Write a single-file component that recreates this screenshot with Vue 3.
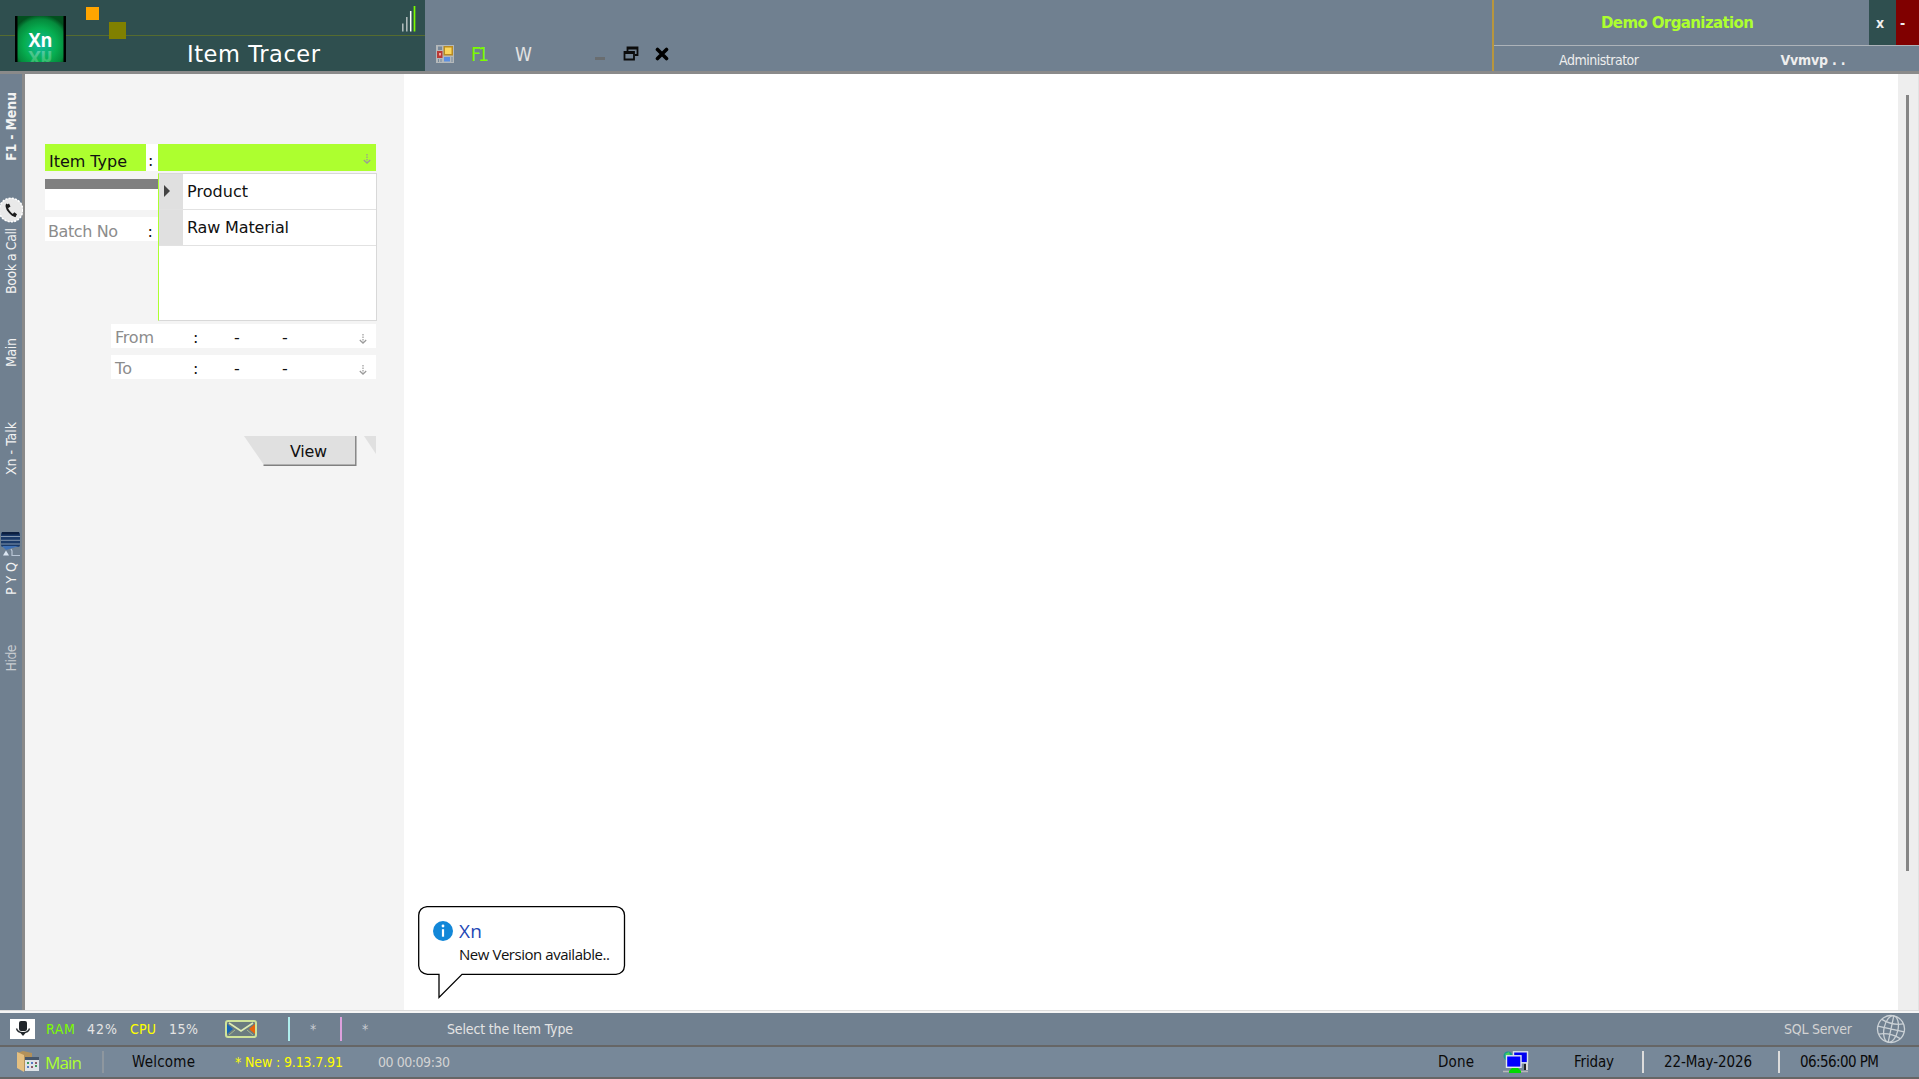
<template>
  <div class="app">
    <header class="header">
      <div class="brand">
        <div class="brand-top"></div>
        <div class="brand-line"></div>
        <svg class="logo" width="51" height="46" viewBox="0 0 51 46">
          <defs>
            <radialGradient id="logoGlow" cx="50%" cy="62%" r="65%">
              <stop offset="0" stop-color="#12b8a4" />
              <stop offset="0.55" stop-color="#06ae50" />
              <stop offset="0.85" stop-color="#058a3c" />
              <stop offset="1" stop-color="#02501f" />
            </radialGradient>
            <linearGradient id="mirror" x1="0" y1="1" x2="0" y2="0">
              <stop offset="0" stop-color="#fff" stop-opacity="0.35" />
              <stop offset="1" stop-color="#fff" stop-opacity="0.1" />
            </linearGradient>
          </defs>
          <rect width="51" height="46" fill="#000" />
          <rect x="2.500" width="46" height="46" fill="url(#logoGlow)" />
          <text x="25.500" y="30.500" text-anchor="middle" textLength="24" lengthAdjust="spacingAndGlyphs" class="logo-text">Xn</text>
          <text x="25.500" y="-35" text-anchor="middle" textLength="24" lengthAdjust="spacingAndGlyphs" transform="scale(1 -1)" class="logo-text reflected">Xn</text>
        </svg>
        <i class="square orange"></i>
        <i class="square olive"></i>
        <svg class="signal" width="18" height="32" viewBox="0 0 18 32">
          <path d="M3.800 22.500v8M7.800 16v14.500" stroke="#b4c0c0" stroke-width="1.500" />
          <path d="M11.700 10v20.500" stroke="#fff" stroke-width="1.500" />
          <path d="M15.500 5v25.500" stroke="#7cfc00" stroke-width="1.700" />
        </svg>
        <span v-fit="133" class="title">Item Tracer</span>
      </div>

      <div class="toolbar">
        <svg class="form-icon" width="18" height="18" viewBox="0 0 18 18">
          <rect width="18" height="18" fill="#b4b8ba" />
          <rect x="2" y="1.500" width="4" height="3.500" fill="#778899" />
          <rect x="1" y="6" width="5.500" height="7" fill="#b93a36" />
          <rect x="3" y="8" width="2" height="2.500" fill="#f4a49c" />
          <rect x="7.500" y="1" width="9.500" height="9.500" fill="#b98b22" />
          <rect x="9" y="2.500" width="6.500" height="6.500" fill="#fbd75c" />
          <rect x="8" y="12" width="6" height="4.500" fill="#5c8fe0" />
          <path d="M2 14h1v3H2zM4.500 14h1v3h-1zM15.500 12h1v5h-1z" fill="#778899" />
        </svg>
        <div class="tool f1"><span v-fit="18">F1</span></div>
        <div class="tool w"><span>W</span></div>
        <i class="minimize"></i>
        <svg class="restore" width="16" height="15" viewBox="0 0 16 15">
          <path d="M4.500 5V1.500h10V9H12M4 2.500h11M1.500 6h9.500v7.500H1.500zM1 7.200h10.500" fill="none" stroke="#0b0b0b" stroke-width="1.800" />
        </svg>
        <svg class="close" width="14" height="14" viewBox="0 0 14 14">
          <path d="M2.500 2.500l9 9M11.500 2.500l-9 9" stroke="#000" stroke-width="3.600" stroke-linecap="round" />
        </svg>
      </div>

      <div class="account">
        <div class="account-top">
          <div class="org"><span v-fit="153">Demo Organization</span></div>
          <button class="win-btn teal">x</button>
          <button class="win-btn red">-</button>
        </div>
        <div class="account-bottom">
          <span v-fit="80" class="user">Administrator</span>
          <span v-fit="65" class="code">Vvmvp . .</span>
        </div>
      </div>
    </header>

    <div class="body">
      <nav class="side">
        <div class="side-slot menu"><b v-fit="69">F1 - Menu</b></div>
        <svg class="phone" width="23" height="26" viewBox="0 0 23 26">
          <circle cx="11" cy="13" r="12" fill="#e9e9e9" />
          <circle cx="11" cy="13" r="11.800" fill="none" stroke="#fff" stroke-width="1.600" stroke-dasharray="2 1.300" />
          <path d="M7 7c-1 2 0 5 2 7.500s4.500 4.500 6.500 4.500" fill="none" stroke="#1c1c1c" stroke-width="2" />
          <path d="M6 8.500l3-2 1.500 3-2.600 1.800zM12.300 17.500l2-2.300 2.700 2-1.700 3z" fill="#1c1c1c" />
        </svg>
        <div class="side-slot call"><span v-fit="66">Book a Call</span></div>
        <div class="side-slot main"><span v-fit="29">Main</span></div>
        <div class="side-slot talk"><span v-fit="53">Xn - Talk</span></div>
        <svg class="pyq-icon" width="22" height="25" viewBox="0 0 22 25">
          <rect x="1" y="0" width="19" height="15" rx="2" fill="#1b3a68" />
          <path d="M2 1h17" stroke="#0c1f40" stroke-width="3" />
          <path d="M1 4.500h19M1 8.300h19M1 12h19" stroke="#8295ac" stroke-width="1" />
          <path d="M2 14h17l-13 4z" fill="#3f70b4" />
          <path d="M3 23.500l3-5 3 5z" fill="#dce6f2" />
          <path d="M11 17l1 2v4.500h8" fill="none" stroke="#b9c6d6" stroke-width="1.200" />
        </svg>
        <div class="side-slot pyq"><span v-fit="33">P Y Q</span></div>
        <div class="side-slot hide"><span v-fit="27">Hide</span></div>
      </nav>

      <section class="panel">
        <div class="row type-row">
          <div class="label active"><span v-fit="78">Item Type</span></div>
          <div class="colon">:</div>
          <div class="combo">
            <svg class="arrow" width="8" height="11" viewBox="0 0 8 11"><path class="stem" d="M4 0v9" /><path d="M.8 6L4 9.200 7.200 6" /></svg>
          </div>
          <div class="dropdown">
            <div v-for="(item, i) in itemTypes" :key="item.name" class="option">
              <div class="option-head"><i v-if="i === 0" class="pointer"></i></div>
              <div class="option-name"><span v-fit="item.width">{{ item.name }}</span></div>
            </div>
          </div>
        </div>
        <div class="divider-bar"></div>
        <div class="blank-row"></div>
        <div class="row batch-row">
          <span v-fit="70" class="muted">Batch No</span>
          <span class="batch-colon">:</span>
        </div>
        <div v-for="d in dates" :key="d.name" class="row date-row">
          <div class="date-name"><span v-fit="d.width">{{ d.name }}</span></div>
          <div class="date-colon">:</div>
          <div class="dash">-</div>
          <div class="dash">-</div>
          <svg class="arrow date-arrow" width="8" height="11" viewBox="0 0 8 11"><path class="stem" d="M4 0v9" /><path d="M.8 6L4 9.200 7.200 6" /></svg>
        </div>
        <div class="actions">
          <button class="view">
            <svg class="view-bg" width="113" height="30" viewBox="0 0 113 30">
              <path d="M0 0h112v29H20z" fill="#e0e0e0" />
              <path d="M19.500 29.300h92.300V0" fill="none" stroke="#808080" stroke-width="1.400" />
            </svg>
            <span v-fit="37" class="view-text">View</span>
          </button>
          <i class="corner"></i>
        </div>
      </section>

      <main class="content">
        <div class="balloon">
          <svg class="balloon-shape" width="208" height="94" viewBox="0 0 208 94">
            <path d="M9 .7h189q8 1 8.500 8.500v50.600q-.5 8-8.500 8.500H44L21 91.500V68.300H9.500Q1.200 67.300.7 59.800V9.200Q1.200 1.700 9 .7z" fill="#fff" stroke="#000" stroke-width="1.300" />
          </svg>
          <div class="balloon-head">
            <svg width="20" height="20" viewBox="0 0 20 20">
              <circle cx="10" cy="10" r="10" fill="#1287d8" />
              <path d="M10 8.200v7.500" stroke="#fff" stroke-width="2.200" />
              <circle cx="10" cy="5" r="1.400" fill="#fff" />
            </svg>
            <span v-fit="23" class="balloon-title">Xn</span>
          </div>
          <div class="balloon-text"><span v-fit="151">New Version available..</span></div>
        </div>
      </main>

      <div class="scroll"><div class="thumb"></div></div>
    </div>

    <footer>
      <div class="bar status">
        <div class="mic">
          <svg width="16" height="16" viewBox="0 0 16 16">
            <rect x="4" y="0" width="8" height="10" rx="2" fill="#22272c" />
            <path d="M1.500 7.500q1 4 6.500 4.200 5.500-.2 6.500-4.200" fill="none" stroke="#22272c" stroke-width="1.300" />
            <path d="M5.500 12h5L8 15z" fill="#22272c" />
          </svg>
        </div>
        <div class="slot ram"><span v-fit="29">RAM</span></div>
        <div class="slot pct1"><span v-fit="30">42%</span></div>
        <div class="slot cpu"><span v-fit="26">CPU</span></div>
        <div class="slot pct2"><span v-fit="29">15%</span></div>
        <svg class="mail" width="32" height="18" viewBox="0 0 32 18">
          <rect x="1" y="1" width="30" height="16" rx="2" fill="#6b7c80" stroke="#cfe39a" stroke-width="2" />
          <path d="M2 4l6 5-6 5z" fill="#1565b5" />
          <path d="M30 4l-6 5 6 5z" fill="#e8640c" />
          <path d="M4 3l12 8L28 3" fill="none" stroke="#dcebb2" stroke-width="1.600" />
          <path d="M4 15l6-5M28 15l-6-5" fill="none" stroke="#a9b98f" stroke-width="1" />
        </svg>
        <i class="sep cyan"></i>
        <div class="slot star">*</div>
        <i class="sep pink"></i>
        <div class="slot star star2">*</div>
        <div class="slot hint"><span v-fit="126">Select the Item Type</span></div>
        <div class="slot sql"><span v-fit="68">SQL Server</span></div>
        <svg class="globe" width="30" height="30" viewBox="0 0 30 30">
          <g fill="none" stroke="#cbd1d6" stroke-width="1.300" transform="rotate(12 15 15)">
            <circle cx="15" cy="15" r="13.500" />
            <ellipse cx="15" cy="15" rx="7" ry="13.500" />
            <path d="M15 1.500v27M1.500 15h27M4 7.500q11 4 22 0M4 22.500q11-4 22 0" />
          </g>
        </svg>
      </div>
      <div class="bar info">
        <svg class="folder" width="24" height="22" viewBox="0 0 24 22">
          <path d="M1 2l6-2 9 2v15l-8 3z" fill="#b3915a" />
          <path d="M1 1l7 3v17l-7-4z" fill="#e4bf80" />
          <rect x="9" y="6" width="14" height="14" fill="#dfe4e8" />
          <path d="M9 6h14v3H9z" fill="#46566a" />
          <path d="M11 11h2v2h-2zM19 14h2v2h-2z" fill="#3f9a5a" />
          <path d="M15 11h2v2h-2zM11 15h2v2h-2z" fill="#567bc0" />
          <path d="M19 11h2v2h-2zM15 15h2v2h-2z" fill="#8a5c68" />
        </svg>
        <div class="slot home"><span v-fit="37">Main</span></div>
        <i class="sep dim"></i>
        <div class="slot welcome"><span v-fit="63">Welcome</span></div>
        <div class="slot version"><span v-fit="108">* New : 9.13.7.91</span></div>
        <div class="slot timer"><span v-fit="72">00 00:09:30</span></div>
        <div class="slot done"><span v-fit="36">Done</span></div>
        <svg class="net" width="26" height="22" viewBox="0 0 26 22">
          <circle cx="5" cy="5" r="4.500" fill="#169a91" />
          <path d="M2 3l4-2 1 3-3 2z" fill="#48d058" />
          <rect x="10.500" y=".8" width="14" height="11" fill="#0000f0" stroke="#dce4ea" stroke-width="1.400" />
          <path d="M22 13v6" stroke="#222" stroke-width="2" />
          <path d="M24 12v7" stroke="#ddd" stroke-width="2" />
          <rect x="3.500" y="4.800" width="14.500" height="11.500" fill="#0000ff" stroke="#e4e9ee" stroke-width="1.400" />
          <path d="M0 20.500h25" stroke="#b8b8b8" stroke-width="1.500" />
          <path d="M9 17h6l3 3v2H6v-2z" fill="#00d800" />
        </svg>
        <div class="slot day"><span v-fit="40">Friday</span></div>
        <i class="sep light"></i>
        <div class="slot date"><span v-fit="88">22-May-2026</span></div>
        <i class="sep light"></i>
        <div class="slot time"><span v-fit="79">06:56:00 PM</span></div>
      </div>
    </footer>
  </div>
</template>

<script setup>
const itemTypes = [
  { name: 'Product', width: 61 },
  { name: 'Raw Material', width: 102 }
];

const dates = [
  { name: 'From', width: 39 },
  { name: 'To', width: 17 }
];

// spreads the letters so a label takes exactly the given length
const vFit = {
  mounted(el, { value }) {
    const box = el.getBoundingClientRect();
    const natural = el.closest('.side') ? box.height : box.width;
    const gaps = el.textContent.length - 1;
    if (gaps > 0) el.style.letterSpacing = (value - natural) / gaps + 'px';
  }
};
</script>

<style>
body {
  margin: 0;
  overflow: hidden;
}
</style>

<style scoped>
.app {
  display: flex;
  flex-direction: column;
  width: 1919px;
  height: 1079px;
  background: #708090;
  font-family: "DejaVu Sans", Verdana, sans-serif;
  font-size: 16px;
  color: #111;
}

* {
  box-sizing: border-box;
}

span, b {
  display: inline-block;
  white-space: pre;
}

svg, i {
  display: block;
  flex-shrink: 0;
}

button {
  border: 0;
  padding: 0;
  font: inherit;
}

/* header */
.header {
  display: flex;
  height: 74px;
  border-bottom: 3px solid #8a8a8a;
  flex-shrink: 0;
}

.brand {
  position: relative;
  width: 425px;
  background: #2f4f4f;
}

.brand-top {
  height: 35px;
}

.brand-line {
  height: 1px;
  background: #556b2f;
}

.logo {
  position: absolute;
  left: 15px;
  top: 16px;
}

.logo-text {
  font: bold 20px "Open Sans", sans-serif;
  fill: #fff;
}

.reflected {
  fill: url(#mirror);
}

.square {
  position: absolute;
}

.orange {
  left: 86px;
  top: 7px;
  width: 13px;
  height: 13px;
  background: #ffa500;
}

.olive {
  left: 109px;
  top: 22px;
  width: 17px;
  height: 17px;
  background: #808000;
}

.signal {
  position: absolute;
  left: 399px;
  top: 1px;
}

.title {
  position: absolute;
  left: 187px;
  top: 40px;
  line-height: 28px;
  font-size: 22.500px;
  color: #fff;
}

.toolbar {
  display: flex;
  flex: 1;
  align-items: flex-start;
  padding: 45px 0 0 11px;
}

.tool {
  font: 19px/20px "DejaVu Sans Condensed", "DejaVu Sans", sans-serif;
  margin-top: -1px;
}

.f1 {
  width: 27px;
  margin-left: 17px;
  color: #7cfc00;
}

.w {
  width: 26px;
  margin-left: 17px;
  color: #e2e2e2;
}

.minimize {
  width: 10px;
  height: 3px;
  margin: 12px 0 0 54px;
  background: #696d70;
}

.restore {
  margin: 1px 0 0 18px;
}

.close {
  margin: 2px 0 0 16px;
}

.account {
  width: 427px;
  border-left: 2px solid #b8963e;
}

.account-top {
  display: flex;
  height: 45px;
}

.org {
  flex: 1;
  padding-left: 107px;
  line-height: 47px;
  font-size: 15px;
  font-weight: bold;
  color: #adff2f;
}

.win-btn {
  width: 27px;
  color: #eee;
  font: bold 14px/42px "DejaVu Sans Condensed", "DejaVu Sans", sans-serif;
  text-align: left;
  padding-left: 7px;
}

.teal {
  background: #2f4f4f;
}

.red {
  width: 23px;
  padding-left: 4px;
  background: #800000;
}

.account-bottom {
  display: flex;
  border-top: 1px solid #adb3b9;
  height: 26px;
  line-height: 29px;
  font-family: "DejaVu Sans Condensed", "DejaVu Sans", sans-serif;
  font-size: 14px;
  color: #eee;
}

.user {
  margin-left: 65px;
}

.code {
  margin-left: 142px;
  font-weight: bold;
}

/* body */
.body {
  display: flex;
  height: 936px;
  flex-shrink: 0;
}

.side {
  width: 25px;
  border-right: 3px solid #898989;
  padding-top: 18px;
  color: #f2f2f2;
  font: 14px/22px "DejaVu Sans Condensed", "DejaVu Sans", sans-serif;
}

.side-slot {
  writing-mode: vertical-rl;
  transform: rotate(180deg);
  display: flex;
  justify-content: flex-end;
  width: 23px;
}

.menu {
  height: 105px;
}

.call {
  height: 110px;
  margin-top: 5px;
}

.main {
  height: 84px;
}

.talk {
  height: 110px;
}

.pyq {
  height: 83px;
  margin-top: 5px;
}

.hide {
  color: #c8ccd0;
}

.panel {
  width: 379px;
  padding: 70px 0 0 20px;
  background: #f4f4f4;
}

.row {
  display: flex;
}

.type-row {
  position: relative;
  height: 27px;
  width: 331px;
  line-height: 27px;
}

.label {
  width: 101px;
  padding: 4px 0 0 4px;
}

.active,
.combo {
  background: #adff2f;
}

.colon {
  width: 12px;
  padding: 3px 0 0 2px;
  background: #fff;
}

.combo {
  flex: 1;
  display: flex;
  justify-content: flex-end;
  padding: 10px 5px 0 0;
}

.arrow {
  fill: none;
  stroke: #999;
  stroke-width: 1.200;
}

.stem {
  stroke-dasharray: 1.500 1;
}

.dropdown {
  position: absolute;
  z-index: 2;
  left: 113px;
  top: 29px;
  width: 219px;
  height: 148px;
  border: 1px solid #d8d8d8;
  border-left-color: #adff2f;
  background: #fff;
}

.option {
  display: flex;
  height: 36px;
  border-bottom: 1px solid #e2e2e2;
}

.option-head {
  width: 24px;
  padding: 11px 0 0 5px;
  background: #e0e0e0;
}

.pointer {
  width: 0;
  border-left: 6px solid #444;
  border-top: 6px solid transparent;
  border-bottom: 6px solid transparent;
}

.option-name {
  padding-left: 4px;
  line-height: 36px;
}

.divider-bar {
  width: 113px;
  height: 10px;
  margin-top: 8px;
  background: #808080;
}

.blank-row {
  width: 113px;
  height: 21px;
  background: #fff;
}

.batch-row {
  width: 113px;
  height: 24px;
  margin: 7px 0 83px;
  padding-left: 3px;
  line-height: 29px;
  background: #fff;
}

.muted,
.date-name {
  color: #8c8c8c;
}

.batch-colon {
  margin-left: 30px;
}

.date-row {
  width: 265px;
  height: 24px;
  margin: 0 0 7px 66px;
  line-height: 28px;
  background: #fff;
}

.date-name {
  width: 82px;
  padding-left: 4px;
}

.date-colon {
  width: 41px;
}

.dash {
  width: 48px;
}

.date-arrow {
  margin: 10px 0 0 29px;
}

.actions {
  display: flex;
  margin: 57px 0 0 199px;
}

.view {
  position: relative;
  width: 113px;
  height: 30px;
  background: none;
  color: #111;
}

.view-bg {
  position: absolute;
  inset: 0;
}

.view-text {
  position: absolute;
  left: 46px;
  top: 0;
  line-height: 31px;
}

.corner {
  width: 12px;
  height: 18px;
  margin-left: 7px;
  background: #e0e0e0;
  clip-path: polygon(0 0, 100% 0, 100% 100%);
}

.content {
  position: relative;
  flex: 1;
  background: #fff;
}

.balloon {
  position: absolute;
  left: 14px;
  top: 832px;
  width: 208px;
  height: 94px;
  padding: 15px 0 0 15px;
}

.balloon-shape {
  position: absolute;
  left: 0;
  top: 0;
}

.balloon-head {
  position: relative;
  display: flex;
  align-items: center;
  height: 20px;
}

.balloon-title {
  margin-left: 6px;
  font: 19px/20px "Open Sans", sans-serif;
  color: #2347b5;
}

.balloon-text {
  position: relative;
  padding-left: 26px;
  font: 15px/26px "Open Sans", sans-serif;
}

.scroll {
  width: 21px;
  padding: 21px 0 0 8px;
  background: #eee;
  border-right: 1px solid #e2e2e2;
}

.thumb {
  width: 3px;
  height: 776px;
  background: #858585;
}

/* footer */
footer {
  border-top: 1px solid #dcdcdc;
  font: 14px/20px "DejaVu Sans Condensed", "DejaVu Sans", sans-serif;
}

.bar {
  display: flex;
  align-items: center;
  border-bottom: 2px solid #666;
}

.status {
  height: 36px;
  padding: 0 0 1px 10px;
  border-top: 2px solid #f5f5f5;
  color: #e4e4e4;
}

.info {
  height: 32px;
  padding-left: 16px;
  background: #778899;
  color: #0a0a0a;
  font-size: 15px;
}

.slot {
  flex-shrink: 0;
}

.mic {
  display: flex;
  align-items: center;
  justify-content: center;
  width: 25px;
  height: 20px;
  margin-right: 11px;
  background: #fff;
}

.ram {
  width: 41px;
  color: #7cfc00;
}

.pct1 {
  width: 43px;
}

.cpu {
  width: 39px;
  color: #ffff00;
}

.pct2 {
  width: 56px;
}

.sep {
  width: 2px;
  height: 22px;
}

.cyan {
  margin-left: 31px;
  height: 24px;
  background: #afeeee;
}

.pink {
  height: 24px;
  background: #dda0dd;
}

.star {
  width: 50px;
  padding-left: 20px;
  color: #c8ccd0;
}

.star2 {
  width: 105px;
}

.hint {
  width: 1337px;
}

.sql {
  width: 92px;
  color: #d3d3d3;
}

.home {
  width: 57px;
  padding: 2px 0 0 5px;
  font-family: "Open Sans", sans-serif;
  font-size: 17px;
  color: #adff2f;
}

.home + .dim {
  margin-left: 5px;
}

.dim {
  background: #8e979f;
}

.welcome {
  width: 131px;
  padding-left: 28px;
}

.version {
  width: 143px;
  color: #ffff00;
  font-size: 14px;
}

.timer {
  width: 1060px;
  color: #d3d3d3;
  font-size: 14px;
}

.done {
  width: 65px;
}

.day {
  width: 113px;
  padding-left: 45px;
}

.light {
  background: #dcdcdc;
}

.date {
  width: 134px;
  padding-left: 20px;
}

.time {
  padding-left: 20px;
}
</style>
